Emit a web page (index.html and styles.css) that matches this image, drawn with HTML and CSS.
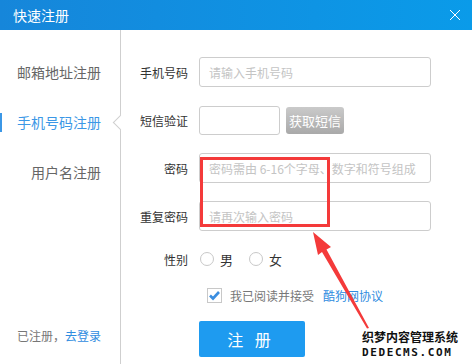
FILE: index.html
```html
<!DOCTYPE html>
<html lang="zh-CN">
<head>
  <meta charset="UTF-8" />
  <title>快速注册</title>
  <link rel="stylesheet" href="styles.css">
</head>
<body>
  <div class="dialog">
    <header class="dialog-head">
      <h1>快速注册</h1>
      <svg class="close" width="12" height="12" viewBox="0 0 12 12">
        <path d="M1 1 L11 11 M11 1 L1 11" stroke="#fff" stroke-width="1" />
      </svg>
    </header>

    <div class="dialog-body">
      <aside class="side">
        <ul class="side-nav">
          <li>邮箱地址注册</li>
          <li class="active">手机号码注册</li>
          <li>用户名注册</li>
        </ul>
        <p class="side-foot">已注册，<a href="#">去登录</a></p>
      </aside>

      <form class="reg-form">
        <div class="row">
          <label>手机号码</label>
          <input type="text" class="field" placeholder="请输入手机号码" />
        </div>
        <div class="row">
          <label>短信验证</label>
          <input type="text" class="field field-code" />
          <button type="button" class="sms-btn">获取短信</button>
        </div>
        <div class="row">
          <label>密码</label>
          <input type="password" class="field" placeholder="密码需由 6-16个字母、数字和符号组成" />
        </div>
        <div class="row">
          <label>重复密码</label>
          <input type="password" class="field" placeholder="请再次输入密码" />
        </div>
        <div class="row row-sex">
          <label>性别</label>
          <span class="radio"></span><span class="opt">男</span>
          <span class="radio"></span><span class="opt">女</span>
        </div>
        <div class="row-agree">
          <span class="check">
            <svg width="13" height="13" viewBox="0 0 13 13">
              <path d="M2 6.5 L5 9.5 L11 3" stroke="#3b8ee0" stroke-width="2.6" fill="none" />
            </svg>
          </span>
          <span class="agree-text">我已阅读并接受</span>
          <a href="#">酷狗网协议</a>
        </div>
        <button type="submit" class="submit">注 册</button>
      </form>
    </div>

    <!-- screenshot markings -->
    <div class="mark-box"></div>
    <svg class="mark-arrow" width="472" height="364" viewBox="0 0 472 364">
      <polygon points="313,232 331,247 326.5,249.5 369,328 367,328.5 322,252 318,255" fill="#f43a3a" />
    </svg>
    <div class="watermark">
      <span class="wm-cn">织梦内容管理系统</span>
      <span class="wm-en">DEDECMS.COM</span>
    </div>
  </div>
</body>
</html>
```

FILE: styles.css
```css
* {
  box-sizing: border-box;
}

body {
  margin: 0;
  font-family: "Noto Sans CJK SC", "Liberation Sans", sans-serif;
  background: #fff;
}

.dialog {
  position: relative;
  width: 472px;
  height: 364px;
  overflow: hidden;
}

.dialog-head {
  height: 30px;
  display: flex;
  align-items: center;
  justify-content: space-between;
  padding: 0 11px 0 13px;
  background: linear-gradient(to right, #1686da, #0a9be9);
}

.dialog-head h1 {
  margin: 0;
  font-size: 14px;
  font-weight: normal;
  color: #fff;
}

.dialog-body {
  display: flex;
  height: 334px;
}

.side {
  width: 121px;
  border-right: 1px solid #cfcfcf;
  display: flex;
  flex-direction: column;
  justify-content: space-between;
}

.side-nav {
  list-style: none;
  margin: 0;
  padding: 17px 0 0;
}

.side-nav li {
  position: relative;
  height: 50px;
  line-height: 50px;
  text-align: right;
  padding-right: 19px;
  font-size: 14px;
  color: #666;
}

.side-nav li.active {
  color: #3b97e6;
}

.side-nav li.active::before {
  content: "";
  position: absolute;
  left: 0;
  top: 16px;
  width: 2px;
  height: 19px;
  background: #3b97e6;
}

.side-nav li.active::after {
  content: "";
  position: absolute;
  right: -6px;
  top: 20px;
  width: 10px;
  height: 10px;
  background: #fff;
  border-left: 1px solid #cfcfcf;
  border-bottom: 1px solid #cfcfcf;
  transform: rotate(45deg);
}

.side-foot {
  margin: 0 0 18px;
  text-align: right;
  padding-right: 19px;
  font-size: 12px;
  line-height: 20px;
  color: #777;
}

.side-foot a,
.row-agree a {
  color: #2f8ce0;
  text-decoration: none;
}

.reg-form {
  flex: 1;
  padding-top: 27px;
}

.row {
  display: flex;
  align-items: center;
  height: 30px;
  margin-bottom: 18px;
}

.row label {
  width: 67px;
  margin-right: 11px;
  text-align: right;
  font-size: 12px;
  color: #333;
}

.field {
  width: 232px;
  height: 30px;
  border: 1px solid #cdcdcd;
  border-radius: 3px;
  padding: 0 9px;
  font-family: inherit;
  font-size: 12px;
  outline: none;
}

.field::placeholder {
  color: #c4c4c4;
}

.field-code {
  width: 81px;
  height: 29px;
}

.sms-btn {
  width: 58px;
  height: 27px;
  margin-left: 6px;
  border: none;
  border-radius: 3px;
  background: linear-gradient(#cacaca, #a9a9a9);
  color: #fff;
  font-family: inherit;
  font-size: 13px;
  padding: 0;
}

.row-sex {
  height: 20px;
  margin-bottom: 16px;
}

.radio {
  width: 14px;
  height: 14px;
  border: 1px solid #c8c8c8;
  border-radius: 50%;
  margin-left: 1px;
}

.opt {
  font-size: 13px;
  color: #333;
  margin: 0 15px 0 6px;
}

.row-agree {
  display: flex;
  align-items: center;
  height: 20px;
  margin-left: 86px;
  font-size: 12px;
}

.check {
  width: 15px;
  height: 15px;
  border: 1px solid #c8c8c8;
  display: flex;
  align-items: center;
  justify-content: center;
  margin-right: 8px;
}

.agree-text {
  color: #777;
  margin-right: 9px;
}

.submit {
  display: block;
  width: 106px;
  height: 36px;
  margin: 16px 0 0 78px;
  border: none;
  border-radius: 2px;
  background: #1e9bf0;
  color: #fff;
  font-family: inherit;
  font-size: 16px;
  letter-spacing: 4px;
  padding-left: 4px;
}

.mark-box {
  position: absolute;
  left: 200px;
  top: 157px;
  width: 130px;
  height: 70px;
  border: 3px solid #f43a3a;
}

.mark-arrow {
  position: absolute;
  left: 0;
  top: 0;
}

.watermark {
  position: absolute;
  left: 362px;
  top: 329px;
  display: flex;
  flex-direction: column;
  align-items: flex-start;
  line-height: 16px;
  color: #111;
  text-shadow: 1px 0 #fff, -1px 0 #fff, 0 1px #fff, 0 -1px #fff;
}

.wm-cn {
  font-size: 12px;
  font-weight: bold;
}

.wm-en {
  font-family: "DejaVu Sans Mono", monospace;
  font-size: 11px;
  font-weight: bold;
  letter-spacing: 1.6px;
}
```
